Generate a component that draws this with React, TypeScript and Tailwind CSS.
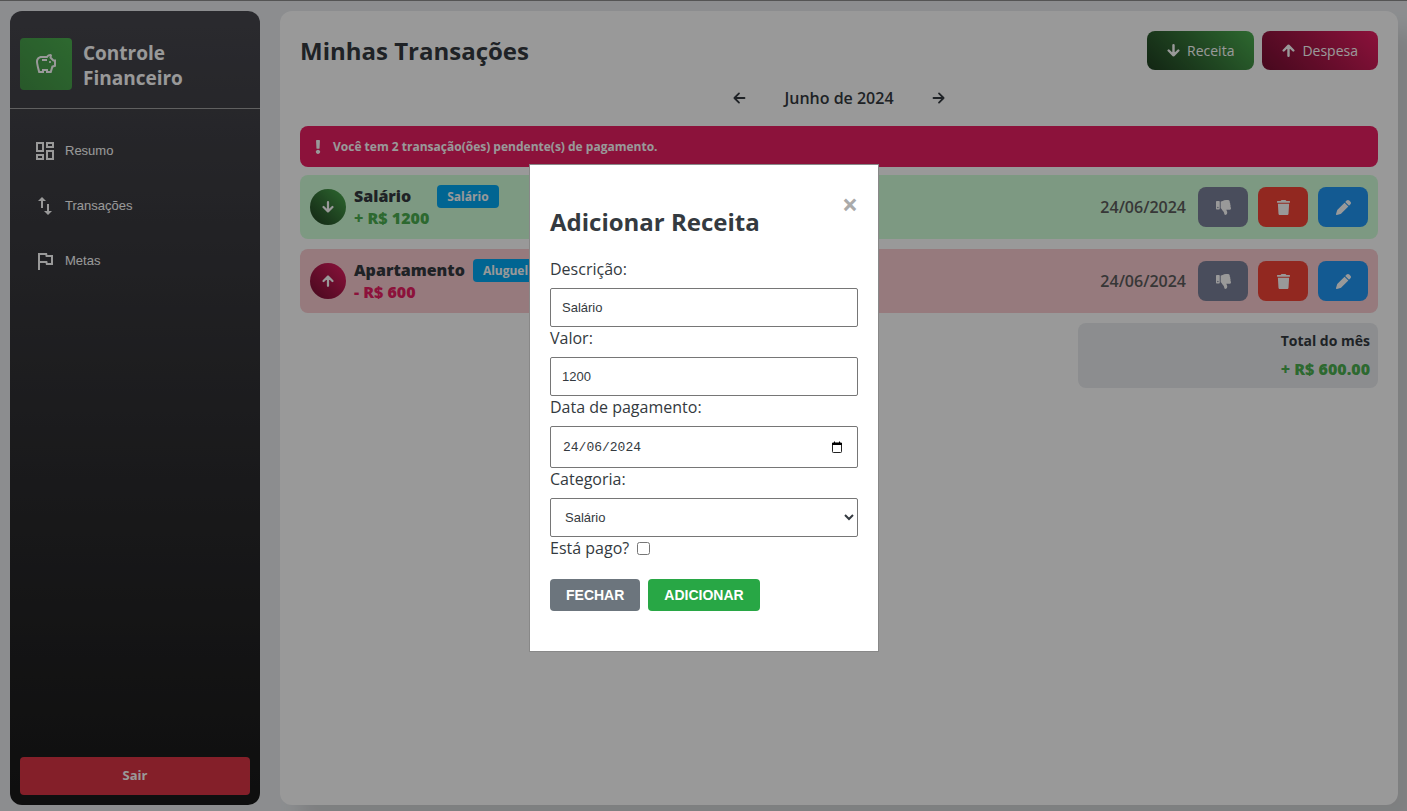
import { useState } from "react";
import { MdOutlineSavings, MdOutlineDashboard, MdOutlineSwapVert, MdOutlineFlag } from "react-icons/md";
import { FaExclamation, FaThumbsDown } from "react-icons/fa";
import { FaPen, FaTrash } from "react-icons/fa6";

type Kind = "receita" | "despesa";

type Transaction = {
  id: number;
  kind: Kind;
  name: string;
  category: string;
  amount: string;
  date: string;
};

const transactions: Transaction[] = [
  { id: 1, kind: "receita", name: "Salário", category: "Salário", amount: "+ R$ 1200", date: "24/06/2024" },
  { id: 2, kind: "despesa", name: "Apartamento", category: "Aluguel", amount: "- R$ 600", date: "24/06/2024" },
];

const greenGradient = "bg-linear-45 from-[#1f3f21] to-[#4caf50]";
const pinkGradient = "bg-linear-45 from-[#760f32] to-[#e91e63]";

function BoldArrow({ up = false, className }: { up?: boolean; className: string }) {
  return (
    <svg
      viewBox="0 0 14 14"
      className={className}
      fill="none"
      stroke="currentColor"
      strokeWidth="2.6"
      strokeLinecap="round"
      strokeLinejoin="round"
    >
      {up ? <path d="M7 12.6V1.8M1.8 7L7 1.8L12.2 7" /> : <path d="M7 1.4V12.2M1.8 7L7 12.2L12.2 7" />}
    </svg>
  );
}

function ThinArrow({ left = false }: { left?: boolean }) {
  return (
    <svg
      viewBox="0 0 16 16"
      className="size-4"
      fill="none"
      stroke="currentColor"
      strokeWidth="1.8"
      strokeLinecap="round"
      strokeLinejoin="round"
    >
      {left ? <path d="M12.5 8H2.4M7 3.4L2.4 8L7 12.6" /> : <path d="M3.5 8H13.6M9 3.4L13.6 8L9 12.6" />}
    </svg>
  );
}

function CalendarIcon() {
  return (
    <svg viewBox="0 0 12 12" className="size-3" fill="none" stroke="#222">
      <rect x="1.5" y="2" width="9" height="9.5" rx="0.8" />
      <path d="M1 2.9H11" strokeWidth="2.2" stroke="#000" />
      <path d="M3.5 0.5V2M8.5 0.5V2" stroke="#000" />
    </svg>
  );
}

function Sidebar() {
  const items = [
    { label: "Resumo", Icon: MdOutlineDashboard },
    { label: "Transações", Icon: MdOutlineSwapVert },
    { label: "Metas", Icon: MdOutlineFlag },
  ];
  return (
    <aside className="flex w-[250px] shrink-0 flex-col rounded-xl bg-linear-to-b from-[#47474e] to-[#191919] text-white">
      <div className="flex h-[98px] items-center gap-[11px] border-b border-[#a0a0a0] px-2.5 pt-2">
        <div className="flex size-[52px] shrink-0 items-center justify-center rounded bg-linear-45 from-[#439346] to-[#4caf50]">
          <MdOutlineSavings className="size-6" />
        </div>
        <h1 className="pt-1 text-[19px] leading-[25px] font-bold">Controle Financeiro</h1>
      </div>
      <nav className="flex flex-col pt-[14px] font-['Liberation_Sans',sans-serif]">
        {items.map(({ label, Icon }) => (
          <a key={label} href="#" className="flex h-[55px] items-center gap-2 pl-[23px] text-[13px]">
            <Icon className="size-6" />
            {label}
          </a>
        ))}
      </nav>
      <button className="mx-2.5 mt-auto mb-2.5 h-[38px] rounded bg-[#dc3545] text-[13px] font-bold">Sair</button>
    </aside>
  );
}

function TransactionRow({ item }: { item: Transaction }) {
  const income = item.kind === "receita";
  return (
    <li
      className={`flex h-16 items-center justify-between rounded-lg px-2.5 ${income ? "bg-[#d1ffd9]" : "bg-[#facbd0]"}`}
    >
      <div className="flex items-center gap-2">
        <div
          className={`flex size-9 items-center justify-center rounded-full text-white ${income ? greenGradient : pinkGradient}`}
        >
          <BoldArrow up={!income} className="size-3" />
        </div>
        <div className="leading-[22px] font-extrabold">
          <p>{item.name}</p>
          <p className={income ? "text-[#4caf50]" : "text-[#e91e63]"}>{item.amount}</p>
        </div>
        <span className="mb-[22px] h-[23px] rounded bg-[#03a9f4] px-2.5 text-xs leading-[23px] font-bold text-white">
          {item.category}
        </span>
      </div>
      <div className="flex items-center gap-2.5 text-white">
        <time className="mr-0.5 font-semibold text-[#5c5c5c]">{item.date}</time>
        <button aria-label="Marcar como não pago" className="flex h-10 w-[50px] items-center justify-center rounded-lg bg-[#7b8099]">
          <FaThumbsDown className="size-[15px]" />
        </button>
        <button aria-label="Excluir" className="flex h-10 w-[50px] items-center justify-center rounded-lg bg-[#f44336]">
          <FaTrash className="size-[15px]" />
        </button>
        <button aria-label="Editar" className="flex h-10 w-[50px] items-center justify-center rounded-lg bg-[#2196f3]">
          <FaPen className="size-[15px]" />
        </button>
      </div>
    </li>
  );
}

function Modal({ onClose }: { onClose: () => void }) {
  const [description, setDescription] = useState("Salário");
  const [value, setValue] = useState("1200");
  const [date, setDate] = useState("24/06/2024");
  const field =
    "mt-[7px] block h-[39px] w-full rounded-xs border border-[#767676] bg-white font-['Liberation_Sans',sans-serif] text-[13px]";
  return (
    <div className="fixed inset-0 flex items-start justify-center bg-black/40 pt-[164px]">
      <div
        role="dialog"
        aria-modal="true"
        aria-labelledby="modal-title"
        className="ml-px w-[350px] border border-[#888888] bg-white px-5 pt-[19px] pb-10"
      >
        <div className="flex h-10 items-center justify-end">
          <button aria-label="Fechar janela" onClick={onClose} className="text-[28px] leading-10 font-bold text-[#aaaaaa]">
            ×
          </button>
        </div>
        <h2 id="modal-title" className="-mt-5 text-2xl leading-9 font-bold">
          Adicionar Receita
        </h2>
        <form className="mt-[18px] leading-[23px]" onSubmit={(e) => e.preventDefault()}>
          <label htmlFor="descricao" className="block">
            Descrição:
          </label>
          <input
            id="descricao"
            value={description}
            onChange={(e) => setDescription(e.target.value)}
            className={`${field} px-[11px]`}
          />
          <label htmlFor="valor" className="block">
            Valor:
          </label>
          <input
            id="valor"
            value={value}
            onChange={(e) => setValue(e.target.value)}
            className={`${field} px-[11px]`}
          />
          <label htmlFor="data" className="block">
            Data de pagamento:
          </label>
          <div className="mt-[7px] flex h-[42px] items-center rounded-xs border border-[#767676] bg-white pr-3.5 pl-3">
            <input
              id="data"
              inputMode="numeric"
              value={date}
              onChange={(e) => setDate(e.target.value)}
              className="min-w-0 flex-1 font-['Liberation_Mono',monospace] text-[13px] outline-none"
            />
            <button type="button" aria-label="Abrir calendário">
              <CalendarIcon />
            </button>
          </div>
          <label htmlFor="categoria" className="block">
            Categoria:
          </label>
          <select id="categoria" className={`${field} px-2.5`}>
            <option>Salário</option>
          </select>
          <div className="flex items-center gap-2">
            <label htmlFor="pago">Está pago?</label>
            <input id="pago" type="checkbox" className="size-[13px]" />
          </div>
          <div className="mt-[19px] flex gap-2 font-['Liberation_Sans',sans-serif] text-sm font-bold text-white">
            <button type="button" onClick={onClose} className="h-8 rounded bg-[#6c757d] px-4">
              FECHAR
            </button>
            <button type="submit" className="h-8 rounded bg-[#28a745] px-4">
              ADICIONAR
            </button>
          </div>
        </form>
      </div>
    </div>
  );
}

export default function App() {
  const [open, setOpen] = useState(true);
  return (
    <div className="flex h-screen gap-5 overflow-hidden border-t border-[#8c8c8c] bg-[#e9ecef] pt-2.5 pr-[9px] pb-1.5 pl-2.5 font-['Open_Sans',sans-serif] text-[#343a40]">
      <Sidebar />
      <main className="min-w-0 flex-1 rounded-xl bg-white px-5 pt-5 shadow-[20px_20px_20px_#d2d4d6]">
        <header className="flex items-center justify-between">
          <h2 className="text-2xl font-bold">Minhas Transações</h2>
          <div className="flex gap-2 text-sm text-white">
            <button
              onClick={() => setOpen(true)}
              className={`flex h-[39px] items-center gap-[7px] rounded-lg px-5 ${greenGradient}`}
            >
              <BoldArrow className="size-[13px]" />
              Receita
            </button>
            <button className={`flex h-[39px] items-center gap-[7px] rounded-lg px-5 ${pinkGradient}`}>
              <BoldArrow up className="size-[13px]" />
              Despesa
            </button>
          </div>
        </header>
        <div className="mt-4 flex h-6 items-center justify-center gap-9 font-semibold">
          <button aria-label="Mês anterior">
            <ThinArrow left />
          </button>
          <span>Junho de 2024</span>
          <button aria-label="Próximo mês">
            <ThinArrow />
          </button>
        </div>
        <p className="mt-4 flex h-[41px] items-center gap-2 rounded-lg bg-[#e91e63] px-[11px] text-xs font-bold text-white">
          <FaExclamation className="size-3.5" />
          Você tem 2 transação(ões) pendente(s) de pagamento.
        </p>
        <ul className="mt-2 flex flex-col gap-2.5">
          {transactions.map((item) => (
            <TransactionRow key={item.id} item={item} />
          ))}
        </ul>
        <section className="mt-2.5 ml-auto h-[65px] w-[300px] rounded-lg bg-[#e9ecef] px-2 pt-1 text-right leading-7">
          <h3 className="text-sm leading-7 font-bold">Total do mês</h3>
          <p className="font-extrabold text-[#4caf50]">+ R$ 600.00</p>
        </section>
      </main>
      {open && <Modal onClose={() => setOpen(false)} />}
    </div>
  );
}
